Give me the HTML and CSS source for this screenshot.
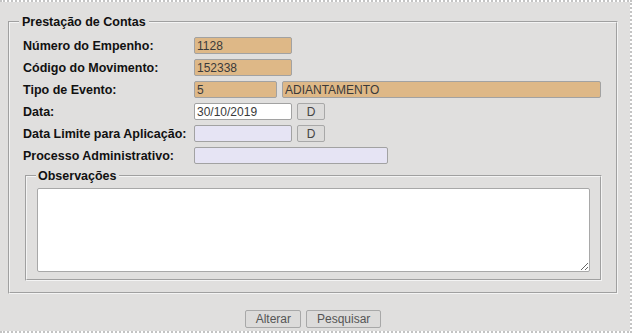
FILE: index.html
```html
<!DOCTYPE html>
<html lang="pt">
<head>
<meta charset="utf-8">
<title>Prestação de Contas</title>
<link rel="stylesheet" href="styles.css">
</head>
<body>
<div class="page">
  <fieldset class="box">
    <legend class="box-title">Prestação de Contas</legend>
    <div class="form">
      <label class="lbl">Número do Empenho:</label>
      <div class="ctl"><input class="inp ro w98" value="1128" readonly></div>

      <label class="lbl">Código do Movimento:</label>
      <div class="ctl"><input class="inp ro w98" value="152338" readonly></div>

      <label class="lbl">Tipo de Evento:</label>
      <div class="ctl"><input class="inp ro w83" value="5" readonly><input class="inp ro w319" value="ADIANTAMENTO" readonly></div>

      <label class="lbl">Data:</label>
      <div class="ctl"><input class="inp wh w98" value="30/10/2019"><button class="btn-d" type="button">D</button></div>

      <label class="lbl">Data Limite para Aplicação:</label>
      <div class="ctl"><input class="inp lv w98" value=""><button class="btn-d" type="button">D</button></div>

      <label class="lbl">Processo Administrativo:</label>
      <div class="ctl"><input class="inp lv w194" value=""></div>
    </div>

    <fieldset class="obs">
      <legend class="obs-title">Observações</legend>
      <textarea class="obs-text"></textarea>
    </fieldset>
  </fieldset>

  <div class="actions">
    <button class="btn" type="button">Alterar</button>
    <button class="btn" type="button">Pesquisar</button>
  </div>
</div>
</body>
</html>
```

FILE: styles.css
```css
html, body {
  margin: 0;
  padding: 0;
  background: #ffffff;
}

.page {
  box-sizing: border-box;
  width: 632px;
  height: 333px;
  border-top: 2px dotted #c4c4c4;
  border-right: 2px dotted #c4c4c4;
  border-bottom: 2px dotted #c4c4c4;
  background: linear-gradient(#e0dfde, #e0dfde) padding-box, #ffffff border-box;
  font-family: "Liberation Sans", Arial, sans-serif;
  color: #111;
  padding-top: 12px;
}

.box {
  box-sizing: border-box;
  width: 610px;
  margin: 0 0 0 8px;
  border: 2px groove #f4f4f4;
  padding: 7px 13px 11px 13px;
}

.box-title {
  font-weight: bold;
  font-size: 12.5px;
  line-height: 16px;
  padding: 0 3px;
  margin-left: -4px;
}

.form {
  display: grid;
  grid-template-columns: 171px 1fr;
  row-gap: 5px;
  align-items: center;
}

.lbl {
  font-weight: bold;
  font-size: 12.5px;
  white-space: nowrap;
}

.ctl {
  display: flex;
  align-items: center;
  gap: 5px;
}

.inp {
  box-sizing: border-box;
  height: 17px;
  margin: 0;
  border: 1px solid #a2a2a2;
  border-radius: 2px;
  padding: 0 2px;
  font-family: "Liberation Sans", Arial, sans-serif;
  font-size: 12px;
  color: #3a3a3a;
  outline: none;
}

.ro { background: #deb887; }
.wh { background: #ffffff; }
.lv { background: #e6e4f4; }

.w83 { width: 83px; }
.w98 { width: 98px; }
.w194 { width: 194px; }
.w319 { width: 319px; }

.btn-d {
  box-sizing: border-box;
  width: 28px;
  height: 17px;
  margin: 0;
  padding: 0;
  border: 1px solid #a8a8a8;
  border-radius: 2px;
  background: #dcdbda;
  font-family: "Liberation Sans", Arial, sans-serif;
  font-size: 12px;
  color: #444;
}

.obs {
  box-sizing: border-box;
  width: 577px;
  margin: 5px 0 0 2px;
  border: 2px groove #f4f4f4;
  padding: 5px 10px 7px 10px;
}

.obs-title {
  font-weight: bold;
  font-size: 12.5px;
  line-height: 14px;
  padding: 0 2px;
  margin-left: -1px;
}

.obs-text {
  display: block;
  box-sizing: border-box;
  width: 553px;
  height: 84px;
  margin: 0;
  border: 1px solid #a8a8a8;
  border-radius: 2px;
  background: #ffffff;
  font-family: "Liberation Sans", Arial, sans-serif;
  font-size: 12px;
}

.actions {
  display: flex;
  justify-content: center;
  gap: 5px;
  width: 610px;
  margin: 16px 0 0 8px;
}

.btn {
  box-sizing: border-box;
  height: 18px;
  margin: 0;
  padding: 0 9.5px;
  border: 1px solid #a8a8a8;
  border-radius: 2px;
  background: #dcdbda;
  font-family: "Liberation Sans", Arial, sans-serif;
  font-size: 12px;
  color: #555;
}
```
